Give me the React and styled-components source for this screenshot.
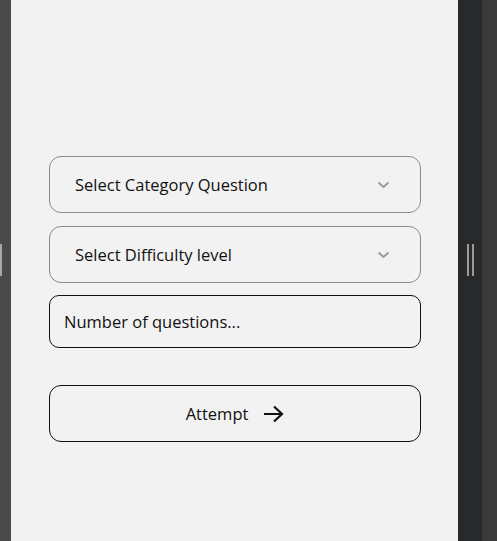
import React from 'react'
import styled, { createGlobalStyle } from 'styled-components'

const Global = createGlobalStyle`
  html, body {
    margin: 0;
    padding: 0;
    height: 100%;
    background: #4a4a4a;
  }
  #root {
    height: 100%;
  }
  * {
    box-sizing: border-box;
  }
`

const Frame = styled.div`
  display: flex;
  width: 497px;
  height: 541px;
  overflow: hidden;
  font-family: 'Open Sans', 'Noto Sans', sans-serif;
`

const SideBar = styled.div`
  width: ${(p) => p.width}px;
  background: ${(p) => p.bg};
  display: flex;
  align-items: flex-start;
  justify-content: ${(p) => p.justify || 'center'};
  padding-top: 244px;
  gap: 3px;
  flex-shrink: 0;
`

const Grip = styled.span`
  width: 2px;
  height: 32px;
  background: ${(p) => p.color || '#9a9a9a'};
`

const Panel = styled.main`
  flex: 1;
  background: #f2f2f2;
  display: flex;
  flex-direction: column;
  padding: 156px 37px 0 38px;
`

const Form = styled.form`
  display: flex;
  flex-direction: column;
`

const Select = styled.div`
  height: 57px;
  border: 1px solid #8a8a8a;
  border-radius: 12px;
  display: flex;
  align-items: center;
  justify-content: space-between;
  padding: 0 30px 0 25px;
  margin-bottom: ${(p) => p.spacing}px;
  font-size: 16.5px;
  color: #111;
`

const Input = styled.input`
  height: 53px;
  border: 1px solid #111;
  border-radius: 10px;
  background: transparent;
  padding: 0 14px;
  font-family: inherit;
  font-size: 16.5px;
  color: #111;
  outline: none;
  &::placeholder {
    color: #111;
    opacity: 1;
  }
`

const Button = styled.button`
  margin-top: 37px;
  height: 57px;
  border: 1px solid #111;
  border-radius: 12px;
  background: transparent;
  display: flex;
  align-items: center;
  justify-content: center;
  gap: 15px;
  font-family: inherit;
  font-size: 16.5px;
  color: #111;
  padding: 0;
`

const Chevron = () => (
  <svg width="13" height="8" viewBox="0 0 13 8">
    <path d="M1.5 1.5 L6.5 6 L11.5 1.5" fill="none" stroke="#9a9a9a" strokeWidth="2" />
  </svg>
)

const Arrow = () => (
  <svg width="21" height="18" viewBox="0 0 21 18">
    <path d="M1 9 H19 M11 1.5 L19 9 L11 16.5" fill="none" stroke="#111" strokeWidth="2.2" />
  </svg>
)

export default function App() {
  return (
    <Frame>
      <Global />
      <SideBar width={11} bg="#4a4a4a" justify="flex-start">
        <Grip color="#a8a8a8" />
      </SideBar>
      <Panel>
        <Form onSubmit={(e) => e.preventDefault()}>
          <Select spacing={13}>
            <span>Select Category Question</span>
            <Chevron />
          </Select>
          <Select spacing={12}>
            <span>Select Difficulty level</span>
            <Chevron />
          </Select>
          <Input placeholder="Number of questions..." />
          <Button type="submit">
            Attempt
            <Arrow />
          </Button>
        </Form>
      </Panel>
      <SideBar width={24} bg="#28292a">
        <Grip />
        <Grip />
      </SideBar>
      <SideBar width={15} bg="#3a3a3a" />
    </Frame>
  )
}
